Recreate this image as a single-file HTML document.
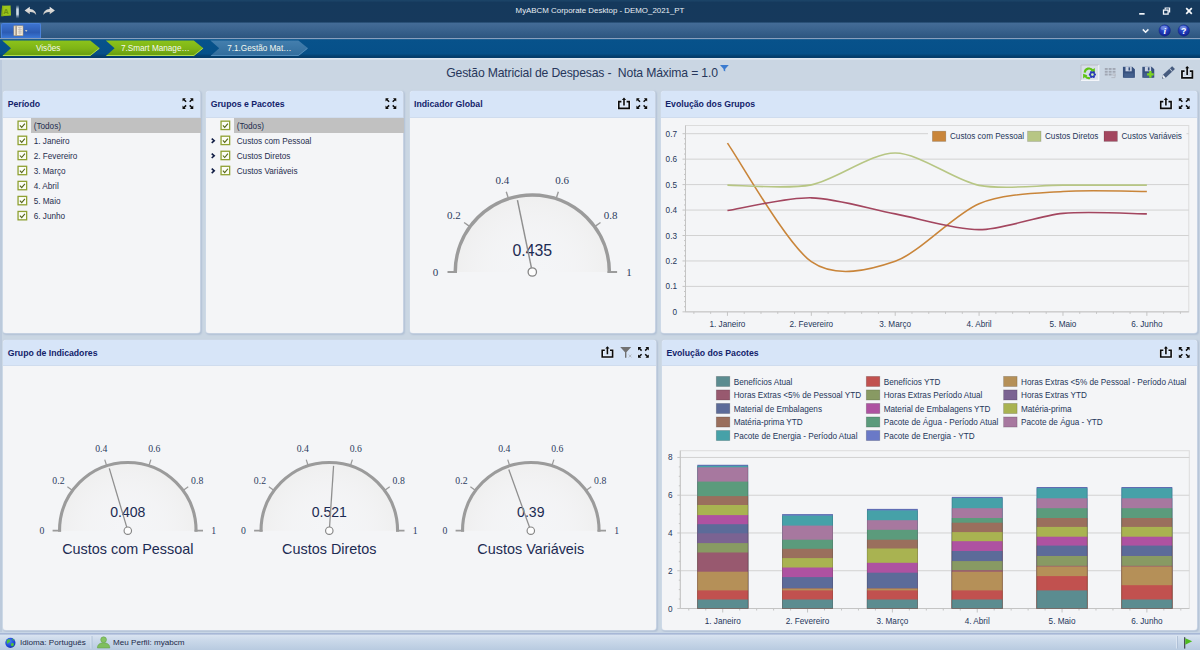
<!DOCTYPE html>
<html lang="pt"><head><meta charset="utf-8"><title>MyABCM Corporate Desktop - DEMO_2021_PT</title>
<style>
*{box-sizing:border-box;margin:0;padding:0}
html,body{width:1200px;height:650px;overflow:hidden}
body{position:relative;background:#cad6e3;font-family:"Liberation Sans",sans-serif;font-size:9px;color:#1f2d4d}
.abs{position:absolute}
#titlebar{left:0;top:0;width:1200px;height:22px;background:linear-gradient(#1c4568 0,#1a4165 1px,#15395c 2.5px,#16395c 100%)}
#titletext{left:0;top:0;width:1200px;height:22px;line-height:22px;text-align:center;color:#e9eef5;font-size:7.9px}
#menubar{left:0;top:22px;width:1200px;height:16px;background:linear-gradient(#1d4368 0,#436b96 1.5px,#39628d 50%,#2c557f 100%)}
#menubtn{left:1px;top:23px;width:40px;height:15px;background:linear-gradient(#3d73cf 0,#2c5cb4 60%,#3b78d6 100%);border-radius:2px 2px 0 0;border:1px solid #4a82dc;border-bottom:none}
#crumbbar{left:0;top:38px;width:1200px;height:20px;background:linear-gradient(#8fa5c1 0,#8098b8 1px,#07528b 1.6px,#065089 78%,#053e6d 92%,#053c6a 100%)}
#pagehl{left:0;top:58px;width:1200px;height:2px;background:linear-gradient(#e3eaf2,#d3dde9)}
#pagetitle{left:0;top:62px;width:1164px;height:22px;line-height:22px;text-align:center;font-size:12.2px;letter-spacing:-0.16px;color:#27375b;white-space:pre}
.panel{position:absolute;background:#f4f5f7;border-radius:3px;box-shadow:0 0 0 0.6px #d3deeb,1px 1.2px 1.6px 0.4px #b3c2d6;overflow:hidden}
.phead{position:absolute;left:0;top:0;right:0;height:27px;background:#d7e5f8;border-bottom:1px solid #cfdcee}
.ptitle{position:absolute;left:4.4px;top:0;height:27px;line-height:27px;font-weight:bold;font-size:8.7px;color:#12226a;white-space:nowrap}
.row{position:absolute;height:15px;line-height:15px;font-size:8.2px;color:#1f2d4d;white-space:nowrap}
.sel{position:absolute;height:15px;background:#c1c1c1}
.cb{position:absolute;width:9.9px;height:9.8px;border:1.25px solid #8fa132;background:#fcfdf6}
#status{left:0;top:631.5px;width:1200px;height:18.5px;background:linear-gradient(#c8d6e6 0,#c8d6e6 1.2px,#a7b7d6 1.4px,#a9b9d7 2.4px,#dae4f1 2.7px,#cbd9ea 45%,#b8cae0 100%)}
.st{position:absolute;top:633px;height:17px;line-height:19px;font-size:8.1px;color:#1b2a4a;white-space:nowrap}
svg{position:absolute;left:0;top:0;overflow:visible}
svg text{font-family:"Liberation Sans",sans-serif}
</style></head>
<body>
<div class="abs" id="titlebar"></div>
<div class="abs" id="titletext">MyABCM Corporate Desktop - DEMO_2021_PT</div>
<div class="abs" id="menubar"></div>
<div class="abs" id="menubtn"></div>
<div class="abs" id="crumbbar"></div>
<div class="abs" id="pagehl"></div>
<div class="abs" style="left:0;top:60px;width:1.6px;height:573px;background:#bccadc"></div>
<div class="abs" id="pagetitle">Gestão Matricial de Despesas -  Nota Máxima = 1.0</div>
<div class="panel" style="left:3.3px;top:91px;width:197px;height:242.4px"><div class="phead" style="height:27px"><div class="ptitle" style="height:27px;line-height:27px">Período</div></div></div>
<div class="panel" style="left:206.3px;top:91px;width:197px;height:242.4px"><div class="phead" style="height:27px"><div class="ptitle" style="height:27px;line-height:27px">Grupos e Pacotes</div></div></div>
<div class="panel" style="left:409.7px;top:91px;width:245.1px;height:242.4px"><div class="phead" style="height:27px"><div class="ptitle" style="height:27px;line-height:27px">Indicador Global</div></div></div>
<div class="panel" style="left:660.9px;top:91px;width:535.9px;height:242.4px"><div class="phead" style="height:27px"><div class="ptitle" style="height:27px;line-height:27px">Evolução dos Grupos</div></div></div>
<div class="panel" style="left:3.3px;top:340px;width:652.8px;height:290px"><div class="phead" style="height:26px"><div class="ptitle" style="height:26px;line-height:26px">Grupo de Indicadores</div></div></div>
<div class="panel" style="left:662px;top:340px;width:534.8px;height:290px"><div class="phead" style="height:26px"><div class="ptitle" style="height:26px;line-height:26px">Evolução dos Pacotes</div></div></div>
<div class="sel" style="left:31px;top:118.1px;width:169.5px"></div><div class="row" style="left:33.7px;top:119.00px">(Todos)</div><div class="row" style="left:33.7px;top:134.05px">1. Janeiro</div><div class="row" style="left:33.7px;top:149.10px">2. Fevereiro</div><div class="row" style="left:33.7px;top:164.15px">3. Março</div><div class="row" style="left:33.7px;top:179.20px">4. Abril</div><div class="row" style="left:33.7px;top:194.25px">5. Maio</div><div class="row" style="left:33.7px;top:209.30px">6. Junho</div>
<div class="sel" style="left:234px;top:118.1px;width:169.5px"></div><div class="row" style="left:236.7px;top:119.00px">(Todos)</div><div class="row" style="left:236.7px;top:134.05px">Custos com Pessoal</div><div class="row" style="left:236.7px;top:149.10px">Custos Diretos</div><div class="row" style="left:236.7px;top:164.15px">Custos Variáveis</div>
<div class="abs" id="status"></div>
<div class="st" style="left:20px">Idioma: Português</div>
<div class="st" style="left:113px">Meu Perfil: myabcm</div>
<svg width="1200" height="650" viewBox="0 0 1200 650">
<defs><radialGradient id="gfill" cx="0.5" cy="1" r="0.5" gradientUnits="objectBoundingBox" gradientTransform="translate(0 0) scale(1 2) translate(0 -0.5)"><stop offset="0" stop-color="#f3f4f6" stop-opacity="0"/><stop offset="0.55" stop-color="#f2f2f3" stop-opacity="0.5"/><stop offset="1" stop-color="#efefef" stop-opacity="1"/></radialGradient><linearGradient id="greeng" x1="0" y1="0" x2="0" y2="1"><stop offset="0" stop-color="#8cc31b"/><stop offset="0.5" stop-color="#7fb516"/><stop offset="0.9" stop-color="#6aa010"/><stop offset="1" stop-color="#86bf22"/></linearGradient><linearGradient id="blueg" x1="0" y1="0" x2="0" y2="1"><stop offset="0" stop-color="#447fae"/><stop offset="1" stop-color="#316c9c"/></linearGradient><linearGradient id="sepg" x1="0" y1="0" x2="0" y2="1"><stop offset="0" stop-color="#9fb6cd" stop-opacity="0.1"/><stop offset="0.3" stop-color="#cfdde9"/><stop offset="0.7" stop-color="#cfdde9"/><stop offset="1" stop-color="#9fb6cd" stop-opacity="0.1"/></linearGradient><linearGradient id="undog" x1="0" y1="0" x2="0" y2="1"><stop offset="0" stop-color="#eeeeee"/><stop offset="1" stop-color="#c4c0ba"/></linearGradient><radialGradient id="ballg" cx="0.45" cy="0.3" r="0.75"><stop offset="0" stop-color="#3b63e0"/><stop offset="0.6" stop-color="#1c36b4"/><stop offset="1" stop-color="#0f1f86"/></radialGradient><radialGradient id="globeg" cx="0.4" cy="0.35" r="0.7"><stop offset="0" stop-color="#4f86f2"/><stop offset="0.7" stop-color="#1d45d6"/><stop offset="1" stop-color="#1532a4"/></radialGradient></defs>
<path d="M455.25 272 A77.05 77.05 0 0 1 609.35 272 Z" fill="url(#gfill)"/>
<path d="M455.25 273 L455.25 272 A77.05 77.05 0 0 1 609.35 272 L609.35 273" fill="none" stroke="#9b9b9b" stroke-width="3.5"/>
<path d="M447.5 272 H457 M607.6 272 H617.1" stroke="#9b9b9b" stroke-width="2" fill="none"/>
<path d="M469.19 226.15 L464.1 222.45 M508.19 197.81 L506.25 191.83 M556.41 197.81 L558.35 191.83 M595.41 226.15 L600.5 222.45" stroke="#9b9b9b" stroke-width="1.4" fill="none"/>
<text x="435.5" y="275.63" text-anchor="middle" font-size="11" fill="#2d3c5e" style="font-family:&quot;Liberation Serif&quot;,serif">0</text>
<text x="453.99" y="218.73" text-anchor="middle" font-size="11" fill="#2d3c5e" style="font-family:&quot;Liberation Serif&quot;,serif">0.2</text>
<text x="502.39" y="183.57" text-anchor="middle" font-size="11" fill="#2d3c5e" style="font-family:&quot;Liberation Serif&quot;,serif">0.4</text>
<text x="562.21" y="183.57" text-anchor="middle" font-size="11" fill="#2d3c5e" style="font-family:&quot;Liberation Serif&quot;,serif">0.6</text>
<text x="610.61" y="218.73" text-anchor="middle" font-size="11" fill="#2d3c5e" style="font-family:&quot;Liberation Serif&quot;,serif">0.8</text>
<text x="629.1" y="275.63" text-anchor="middle" font-size="11" fill="#2d3c5e" style="font-family:&quot;Liberation Serif&quot;,serif">1</text>
<text x="532.3" y="256" text-anchor="middle" font-size="15.9" fill="#1c2b52">0.435</text>
<path d="M531.45 267.89 L517.44 200.22" stroke="#8f8f8f" stroke-width="1.45" fill="none"/>
<circle cx="532.3" cy="272" r="4.2" fill="#fdfdfd" stroke="#858585" stroke-width="1.3"/>
<path d="M59.53 530.7 A68.27 68.27 0 0 1 196.07 530.7 Z" fill="url(#gfill)"/>
<path d="M59.53 531.7 L59.53 530.7 A68.27 68.27 0 0 1 196.07 530.7 L196.07 531.7" fill="none" stroke="#9b9b9b" stroke-width="3.1"/>
<path d="M52.6 530.7 H61.08 M194.52 530.7 H203" stroke="#9b9b9b" stroke-width="1.77" fill="none"/>
<path d="M71.88 490.07 L67.37 486.79 M106.44 464.96 L104.72 459.66 M149.16 464.96 L150.88 459.66 M183.72 490.07 L188.23 486.79" stroke="#9b9b9b" stroke-width="1.24" fill="none"/>
<text x="42.03" y="533.92" text-anchor="middle" font-size="9.75" fill="#2d3c5e" style="font-family:&quot;Liberation Serif&quot;,serif">0</text>
<text x="58.41" y="483.5" text-anchor="middle" font-size="9.75" fill="#2d3c5e" style="font-family:&quot;Liberation Serif&quot;,serif">0.2</text>
<text x="101.29" y="452.34" text-anchor="middle" font-size="9.75" fill="#2d3c5e" style="font-family:&quot;Liberation Serif&quot;,serif">0.4</text>
<text x="154.31" y="452.34" text-anchor="middle" font-size="9.75" fill="#2d3c5e" style="font-family:&quot;Liberation Serif&quot;,serif">0.6</text>
<text x="197.19" y="483.5" text-anchor="middle" font-size="9.75" fill="#2d3c5e" style="font-family:&quot;Liberation Serif&quot;,serif">0.8</text>
<text x="213.57" y="533.92" text-anchor="middle" font-size="9.75" fill="#2d3c5e" style="font-family:&quot;Liberation Serif&quot;,serif">1</text>
<text x="127.8" y="516.52" text-anchor="middle" font-size="14.09" fill="#1c2b52">0.408</text>
<path d="M126.74 527.13 L109.29 468.44" stroke="#8f8f8f" stroke-width="1.28" fill="none"/>
<circle cx="127.8" cy="530.7" r="3.72" fill="#fdfdfd" stroke="#858585" stroke-width="1.15"/>
<text x="127.8" y="553.7" text-anchor="middle" font-size="14.4" fill="#1c2b52">Custos com Pessoal</text>
<path d="M261.03 530.7 A68.27 68.27 0 0 1 397.57 530.7 Z" fill="url(#gfill)"/>
<path d="M261.03 531.7 L261.03 530.7 A68.27 68.27 0 0 1 397.57 530.7 L397.57 531.7" fill="none" stroke="#9b9b9b" stroke-width="3.1"/>
<path d="M254.1 530.7 H262.58 M396.02 530.7 H404.5" stroke="#9b9b9b" stroke-width="1.77" fill="none"/>
<path d="M273.38 490.07 L268.87 486.79 M307.94 464.96 L306.22 459.66 M350.66 464.96 L352.38 459.66 M385.22 490.07 L389.73 486.79" stroke="#9b9b9b" stroke-width="1.24" fill="none"/>
<text x="243.53" y="533.92" text-anchor="middle" font-size="9.75" fill="#2d3c5e" style="font-family:&quot;Liberation Serif&quot;,serif">0</text>
<text x="259.91" y="483.5" text-anchor="middle" font-size="9.75" fill="#2d3c5e" style="font-family:&quot;Liberation Serif&quot;,serif">0.2</text>
<text x="302.79" y="452.34" text-anchor="middle" font-size="9.75" fill="#2d3c5e" style="font-family:&quot;Liberation Serif&quot;,serif">0.4</text>
<text x="355.81" y="452.34" text-anchor="middle" font-size="9.75" fill="#2d3c5e" style="font-family:&quot;Liberation Serif&quot;,serif">0.6</text>
<text x="398.69" y="483.5" text-anchor="middle" font-size="9.75" fill="#2d3c5e" style="font-family:&quot;Liberation Serif&quot;,serif">0.8</text>
<text x="415.07" y="533.92" text-anchor="middle" font-size="9.75" fill="#2d3c5e" style="font-family:&quot;Liberation Serif&quot;,serif">1</text>
<text x="329.3" y="516.52" text-anchor="middle" font-size="14.09" fill="#1c2b52">0.521</text>
<path d="M329.55 526.99 L333.58 465.89" stroke="#8f8f8f" stroke-width="1.28" fill="none"/>
<circle cx="329.3" cy="530.7" r="3.72" fill="#fdfdfd" stroke="#858585" stroke-width="1.15"/>
<text x="329.3" y="553.7" text-anchor="middle" font-size="14.4" fill="#1c2b52">Custos Diretos</text>
<path d="M462.53 530.7 A68.27 68.27 0 0 1 599.07 530.7 Z" fill="url(#gfill)"/>
<path d="M462.53 531.7 L462.53 530.7 A68.27 68.27 0 0 1 599.07 530.7 L599.07 531.7" fill="none" stroke="#9b9b9b" stroke-width="3.1"/>
<path d="M455.6 530.7 H464.08 M597.52 530.7 H606" stroke="#9b9b9b" stroke-width="1.77" fill="none"/>
<path d="M474.88 490.07 L470.37 486.79 M509.44 464.96 L507.72 459.66 M552.16 464.96 L553.88 459.66 M586.72 490.07 L591.23 486.79" stroke="#9b9b9b" stroke-width="1.24" fill="none"/>
<text x="445.03" y="533.92" text-anchor="middle" font-size="9.75" fill="#2d3c5e" style="font-family:&quot;Liberation Serif&quot;,serif">0</text>
<text x="461.41" y="483.5" text-anchor="middle" font-size="9.75" fill="#2d3c5e" style="font-family:&quot;Liberation Serif&quot;,serif">0.2</text>
<text x="504.29" y="452.34" text-anchor="middle" font-size="9.75" fill="#2d3c5e" style="font-family:&quot;Liberation Serif&quot;,serif">0.4</text>
<text x="557.31" y="452.34" text-anchor="middle" font-size="9.75" fill="#2d3c5e" style="font-family:&quot;Liberation Serif&quot;,serif">0.6</text>
<text x="600.19" y="483.5" text-anchor="middle" font-size="9.75" fill="#2d3c5e" style="font-family:&quot;Liberation Serif&quot;,serif">0.8</text>
<text x="616.57" y="533.92" text-anchor="middle" font-size="9.75" fill="#2d3c5e" style="font-family:&quot;Liberation Serif&quot;,serif">1</text>
<text x="530.8" y="516.52" text-anchor="middle" font-size="14.09" fill="#1c2b52">0.39</text>
<path d="M529.54 527.2 L508.8 469.59" stroke="#8f8f8f" stroke-width="1.28" fill="none"/>
<circle cx="530.8" cy="530.7" r="3.72" fill="#fdfdfd" stroke="#858585" stroke-width="1.15"/>
<text x="530.8" y="553.7" text-anchor="middle" font-size="14.4" fill="#1c2b52">Custos Variáveis</text>
<rect x="685.5" y="125.5" width="503.3" height="186.35" fill="none" stroke="#dcdcdc" stroke-width="1"/>
<path d="M685.5 286.4 H1188.8 M685.5 260.95 H1188.8 M685.5 235.5 H1188.8 M685.5 210.05 H1188.8 M685.5 184.6 H1188.8 M685.5 159.15 H1188.8 M685.5 133.7 H1188.8" stroke="#d2d2d2" stroke-width="1" fill="none"/>
<path d="M685.5 125.5 V311.85 H1188.8" stroke="#c4c4c4" stroke-width="1" fill="none"/>
<path d="M682.5 311.85 H685.5 M684.0 306.76 H685.5 M684.0 301.67 H685.5 M684.0 296.58 H685.5 M684.0 291.49 H685.5 M682.5 286.4 H685.5 M684.0 281.31 H685.5 M684.0 276.22 H685.5 M684.0 271.13 H685.5 M684.0 266.04 H685.5 M682.5 260.95 H685.5 M684.0 255.86 H685.5 M684.0 250.77 H685.5 M684.0 245.68 H685.5 M684.0 240.59 H685.5 M682.5 235.5 H685.5 M684.0 230.41 H685.5 M684.0 225.32 H685.5 M684.0 220.23 H685.5 M684.0 215.14 H685.5 M682.5 210.05 H685.5 M684.0 204.96 H685.5 M684.0 199.87 H685.5 M684.0 194.78 H685.5 M684.0 189.69 H685.5 M682.5 184.6 H685.5 M684.0 179.51 H685.5 M684.0 174.42 H685.5 M684.0 169.33 H685.5 M684.0 164.24 H685.5 M682.5 159.15 H685.5 M684.0 154.06 H685.5 M684.0 148.97 H685.5 M684.0 143.88 H685.5 M684.0 138.79 H685.5 M682.5 133.7 H685.5 M727.44 311.85 V315.85 M693.89 311.85 V313.85 M710.66 311.85 V313.85 M744.22 311.85 V313.85 M760.99 311.85 V313.85 M811.33 311.85 V315.85 M777.77 311.85 V313.85 M794.55 311.85 V313.85 M828.1 311.85 V313.85 M844.88 311.85 V313.85 M895.21 311.85 V315.85 M861.65 311.85 V313.85 M878.43 311.85 V313.85 M911.98 311.85 V313.85 M928.76 311.85 V313.85 M979.09 311.85 V315.85 M945.54 311.85 V313.85 M962.32 311.85 V313.85 M995.87 311.85 V313.85 M1012.64 311.85 V313.85 M1062.97 311.85 V315.85 M1029.42 311.85 V313.85 M1046.2 311.85 V313.85 M1079.75 311.85 V313.85 M1096.53 311.85 V313.85 M1146.86 311.85 V315.85 M1113.31 311.85 V313.85 M1130.08 311.85 V313.85 M1163.63 311.85 V313.85 M1180.41 311.85 V313.85" stroke="#c4c4c4" stroke-width="1" fill="none"/>
<text x="677" y="314.85" text-anchor="end" font-size="8.2" fill="#25355a">0</text>
<text x="677" y="289.4" text-anchor="end" font-size="8.2" fill="#25355a">0.1</text>
<text x="677" y="263.95" text-anchor="end" font-size="8.2" fill="#25355a">0.2</text>
<text x="677" y="238.5" text-anchor="end" font-size="8.2" fill="#25355a">0.3</text>
<text x="677" y="213.05" text-anchor="end" font-size="8.2" fill="#25355a">0.4</text>
<text x="677" y="187.6" text-anchor="end" font-size="8.2" fill="#25355a">0.5</text>
<text x="677" y="162.15" text-anchor="end" font-size="8.2" fill="#25355a">0.6</text>
<text x="677" y="136.7" text-anchor="end" font-size="8.2" fill="#25355a">0.7</text>
<text x="727.44" y="326.5" text-anchor="middle" font-size="8.2" fill="#25355a">1. Janeiro</text>
<text x="811.33" y="326.5" text-anchor="middle" font-size="8.2" fill="#25355a">2. Fevereiro</text>
<text x="895.21" y="326.5" text-anchor="middle" font-size="8.2" fill="#25355a">3. Março</text>
<text x="979.09" y="326.5" text-anchor="middle" font-size="8.2" fill="#25355a">4. Abril</text>
<text x="1062.97" y="326.5" text-anchor="middle" font-size="8.2" fill="#25355a">5. Maio</text>
<text x="1146.86" y="326.5" text-anchor="middle" font-size="8.2" fill="#25355a">6. Junho</text>
<path d="M727.44 143.12 C739.74 160.51 786.72 244.39 811.33 261.71 C835.93 279.03 870.6 269.71 895.21 261.2 C919.81 252.69 954.49 213.92 979.09 203.69 C1003.7 193.46 1038.37 193.26 1062.97 191.47 C1087.58 189.68 1134.56 191.47 1146.86 191.47" stroke="#c9853a" stroke-width="1.6" fill="none" stroke-linecap="butt"/>
<path d="M727.44 185.11 C739.74 185.07 786.72 189.56 811.33 184.85 C835.93 180.15 870.6 152.97 895.21 153.04 C919.81 153.12 954.49 180.66 979.09 185.36 C1003.7 190.07 1038.37 185.15 1062.97 185.11 C1087.58 185.07 1134.56 185.11 1146.86 185.11" stroke="#b7c684" stroke-width="1.6" fill="none" stroke-linecap="butt"/>
<path d="M727.44 210.56 C739.74 208.69 786.72 197.35 811.33 197.83 C835.93 198.32 870.6 209.2 895.21 213.87 C919.81 218.53 954.49 229.72 979.09 229.65 C1003.7 229.57 1038.37 215.67 1062.97 213.36 C1087.58 211.04 1134.56 213.79 1146.86 213.87" stroke="#a3465f" stroke-width="1.6" fill="none" stroke-linecap="butt"/>
<rect x="928" y="127.5" width="258.5" height="17.5" fill="#f4f5f7"/>
<rect x="932.4" y="131.2" width="13.4" height="10.2" fill="#c9853a" stroke="rgba(0,0,0,0.18)" stroke-width="0.8"/>
<text x="950" y="139.4" font-size="8.15" fill="#25355a">Custos com Pessoal</text>
<rect x="1027.6" y="131.2" width="13.4" height="10.2" fill="#b7c684" stroke="rgba(0,0,0,0.18)" stroke-width="0.8"/>
<text x="1045" y="139.4" font-size="8.15" fill="#25355a">Custos Diretos</text>
<rect x="1104" y="131.2" width="13.4" height="10.2" fill="#a3465f" stroke="rgba(0,0,0,0.18)" stroke-width="0.8"/>
<text x="1121.5" y="139.4" font-size="8.15" fill="#25355a">Custos Variáveis</text>
<rect x="680.3" y="450.7" width="509" height="157.8" fill="none" stroke="#dcdcdc" stroke-width="1"/>
<path d="M680.3 570.74 H1189.3 M680.3 532.98 H1189.3 M680.3 495.22 H1189.3 M680.3 457.46 H1189.3" stroke="#d2d2d2" stroke-width="1" fill="none"/>
<path d="M680.3 450.7 V608.5 H1189.3" stroke="#c4c4c4" stroke-width="1" fill="none"/>
<path d="M677.3 608.5 H680.3 M678.8 599.06 H680.3 M678.8 589.62 H680.3 M678.8 580.18 H680.3 M677.3 570.74 H680.3 M678.8 561.3 H680.3 M678.8 551.86 H680.3 M678.8 542.42 H680.3 M677.3 532.98 H680.3 M678.8 523.54 H680.3 M678.8 514.1 H680.3 M678.8 504.66 H680.3 M677.3 495.22 H680.3 M678.8 485.78 H680.3 M678.8 476.34 H680.3 M678.8 466.9 H680.3 M677.3 457.46 H680.3 M722.72 608.5 V612.5 M688.78 608.5 V610.5 M705.75 608.5 V610.5 M739.68 608.5 V610.5 M756.65 608.5 V610.5 M807.55 608.5 V612.5 M773.62 608.5 V610.5 M790.58 608.5 V610.5 M824.52 608.5 V610.5 M841.48 608.5 V610.5 M892.38 608.5 V612.5 M858.45 608.5 V610.5 M875.42 608.5 V610.5 M909.35 608.5 V610.5 M926.32 608.5 V610.5 M977.22 608.5 V612.5 M943.28 608.5 V610.5 M960.25 608.5 V610.5 M994.18 608.5 V610.5 M1011.15 608.5 V610.5 M1062.05 608.5 V612.5 M1028.12 608.5 V610.5 M1045.08 608.5 V610.5 M1079.02 608.5 V610.5 M1095.98 608.5 V610.5 M1146.88 608.5 V612.5 M1112.95 608.5 V610.5 M1129.92 608.5 V610.5 M1163.85 608.5 V610.5 M1180.82 608.5 V610.5" stroke="#c4c4c4" stroke-width="1" fill="none"/>
<text x="672.5" y="611.5" text-anchor="end" font-size="8.2" fill="#25355a">0</text>
<text x="672.5" y="573.74" text-anchor="end" font-size="8.2" fill="#25355a">2</text>
<text x="672.5" y="535.98" text-anchor="end" font-size="8.2" fill="#25355a">4</text>
<text x="672.5" y="498.22" text-anchor="end" font-size="8.2" fill="#25355a">6</text>
<text x="672.5" y="460.46" text-anchor="end" font-size="8.2" fill="#25355a">8</text>
<text x="722.72" y="624" text-anchor="middle" font-size="8.2" fill="#25355a">1. Janeiro</text>
<text x="807.55" y="624" text-anchor="middle" font-size="8.2" fill="#25355a">2. Fevereiro</text>
<text x="892.38" y="624" text-anchor="middle" font-size="8.2" fill="#25355a">3. Março</text>
<text x="977.22" y="624" text-anchor="middle" font-size="8.2" fill="#25355a">4. Abril</text>
<text x="1062.05" y="624" text-anchor="middle" font-size="8.2" fill="#25355a">5. Maio</text>
<text x="1146.88" y="624" text-anchor="middle" font-size="8.2" fill="#25355a">6. Junho</text>
<rect x="697.32" y="464.8" width="50.8" height="143.7" fill="#6a79c7"/>
<rect x="697.32" y="465.8" width="50.8" height="142.7" fill="#46a1a8"/>
<rect x="697.32" y="467.3" width="50.8" height="141.2" fill="#a7789f"/>
<rect x="697.32" y="481.6" width="50.8" height="126.9" fill="#5b9b7c"/>
<rect x="697.32" y="496.1" width="50.8" height="112.4" fill="#9a6f5d"/>
<rect x="697.32" y="505" width="50.8" height="103.5" fill="#a9b351"/>
<rect x="697.32" y="515.1" width="50.8" height="93.4" fill="#ae52a1"/>
<rect x="697.32" y="524.2" width="50.8" height="84.3" fill="#5c6b99"/>
<rect x="697.32" y="533.3" width="50.8" height="75.2" fill="#7b6392"/>
<rect x="697.32" y="543.1" width="50.8" height="65.4" fill="#889a63"/>
<rect x="697.32" y="552.5" width="50.8" height="56" fill="#98596f"/>
<rect x="697.32" y="571.7" width="50.8" height="36.8" fill="#b59058"/>
<rect x="697.32" y="590.4" width="50.8" height="18.1" fill="#c1514f"/>
<rect x="697.32" y="599.5" width="50.8" height="9" fill="#5b8c90"/>
<rect x="697.72" y="465.2" width="50" height="143.3" fill="none" stroke="#000000" stroke-opacity="0.13" stroke-width="0.8"/>
<rect x="782.15" y="514.1" width="50.8" height="94.4" fill="#6a79c7"/>
<rect x="782.15" y="515.6" width="50.8" height="92.9" fill="#46a1a8"/>
<rect x="782.15" y="525.6" width="50.8" height="82.9" fill="#a7789f"/>
<rect x="782.15" y="539.7" width="50.8" height="68.8" fill="#5b9b7c"/>
<rect x="782.15" y="548.8" width="50.8" height="59.7" fill="#9a6f5d"/>
<rect x="782.15" y="558.1" width="50.8" height="50.4" fill="#a9b351"/>
<rect x="782.15" y="567.5" width="50.8" height="41" fill="#ae52a1"/>
<rect x="782.15" y="577.1" width="50.8" height="31.4" fill="#5c6b99"/>
<rect x="782.15" y="588" width="50.8" height="20.5" fill="#7b6392"/>
<rect x="782.15" y="588.2" width="50.8" height="20.3" fill="#889a63"/>
<rect x="782.15" y="588.4" width="50.8" height="20.1" fill="#98596f"/>
<rect x="782.15" y="588.8" width="50.8" height="19.7" fill="#b59058"/>
<rect x="782.15" y="590.4" width="50.8" height="18.1" fill="#c1514f"/>
<rect x="782.15" y="599.5" width="50.8" height="9" fill="#5b8c90"/>
<rect x="782.55" y="514.5" width="50" height="94" fill="none" stroke="#000000" stroke-opacity="0.13" stroke-width="0.8"/>
<rect x="866.98" y="508.9" width="50.8" height="99.6" fill="#6a79c7"/>
<rect x="866.98" y="510.4" width="50.8" height="98.1" fill="#46a1a8"/>
<rect x="866.98" y="520.2" width="50.8" height="88.3" fill="#a7789f"/>
<rect x="866.98" y="529.8" width="50.8" height="78.7" fill="#5b9b7c"/>
<rect x="866.98" y="539.7" width="50.8" height="68.8" fill="#9a6f5d"/>
<rect x="866.98" y="548.5" width="50.8" height="60" fill="#a9b351"/>
<rect x="866.98" y="562.8" width="50.8" height="45.7" fill="#ae52a1"/>
<rect x="866.98" y="572.7" width="50.8" height="35.8" fill="#5c6b99"/>
<rect x="866.98" y="588" width="50.8" height="20.5" fill="#7b6392"/>
<rect x="866.98" y="588.2" width="50.8" height="20.3" fill="#889a63"/>
<rect x="866.98" y="588.4" width="50.8" height="20.1" fill="#98596f"/>
<rect x="866.98" y="588.8" width="50.8" height="19.7" fill="#b59058"/>
<rect x="866.98" y="590.4" width="50.8" height="18.1" fill="#c1514f"/>
<rect x="866.98" y="599.5" width="50.8" height="9" fill="#5b8c90"/>
<rect x="867.38" y="509.3" width="50" height="99.2" fill="none" stroke="#000000" stroke-opacity="0.13" stroke-width="0.8"/>
<rect x="951.82" y="496.9" width="50.8" height="111.6" fill="#6a79c7"/>
<rect x="951.82" y="498.1" width="50.8" height="110.4" fill="#46a1a8"/>
<rect x="951.82" y="508.2" width="50.8" height="100.3" fill="#a7789f"/>
<rect x="951.82" y="518" width="50.8" height="90.5" fill="#5b9b7c"/>
<rect x="951.82" y="522.7" width="50.8" height="85.8" fill="#9a6f5d"/>
<rect x="951.82" y="532.1" width="50.8" height="76.4" fill="#a9b351"/>
<rect x="951.82" y="541.2" width="50.8" height="67.3" fill="#ae52a1"/>
<rect x="951.82" y="551" width="50.8" height="57.5" fill="#5c6b99"/>
<rect x="951.82" y="560.9" width="50.8" height="47.6" fill="#7b6392"/>
<rect x="951.82" y="561.1" width="50.8" height="47.4" fill="#889a63"/>
<rect x="951.82" y="570.2" width="50.8" height="38.3" fill="#98596f"/>
<rect x="951.82" y="571.7" width="50.8" height="36.8" fill="#b59058"/>
<rect x="951.82" y="590.4" width="50.8" height="18.1" fill="#c1514f"/>
<rect x="951.82" y="599.5" width="50.8" height="9" fill="#5b8c90"/>
<rect x="952.22" y="497.3" width="50" height="111.2" fill="none" stroke="#000000" stroke-opacity="0.13" stroke-width="0.8"/>
<rect x="1036.65" y="487" width="50.8" height="121.5" fill="#6a79c7"/>
<rect x="1036.65" y="488.2" width="50.8" height="120.3" fill="#46a1a8"/>
<rect x="1036.65" y="498.3" width="50.8" height="110.2" fill="#a7789f"/>
<rect x="1036.65" y="508.2" width="50.8" height="100.3" fill="#5b9b7c"/>
<rect x="1036.65" y="518" width="50.8" height="90.5" fill="#9a6f5d"/>
<rect x="1036.65" y="526.9" width="50.8" height="81.6" fill="#a9b351"/>
<rect x="1036.65" y="536.7" width="50.8" height="71.8" fill="#ae52a1"/>
<rect x="1036.65" y="545.6" width="50.8" height="62.9" fill="#5c6b99"/>
<rect x="1036.65" y="555.8" width="50.8" height="52.7" fill="#7b6392"/>
<rect x="1036.65" y="556" width="50.8" height="52.5" fill="#889a63"/>
<rect x="1036.65" y="565.8" width="50.8" height="42.7" fill="#98596f"/>
<rect x="1036.65" y="566.5" width="50.8" height="42" fill="#b59058"/>
<rect x="1036.65" y="576.1" width="50.8" height="32.4" fill="#c1514f"/>
<rect x="1036.65" y="590.4" width="50.8" height="18.1" fill="#5b8c90"/>
<rect x="1037.05" y="487.4" width="50" height="121.1" fill="none" stroke="#000000" stroke-opacity="0.13" stroke-width="0.8"/>
<rect x="1121.48" y="487" width="50.8" height="121.5" fill="#6a79c7"/>
<rect x="1121.48" y="488.2" width="50.8" height="120.3" fill="#46a1a8"/>
<rect x="1121.48" y="498.3" width="50.8" height="110.2" fill="#a7789f"/>
<rect x="1121.48" y="508.2" width="50.8" height="100.3" fill="#5b9b7c"/>
<rect x="1121.48" y="518" width="50.8" height="90.5" fill="#9a6f5d"/>
<rect x="1121.48" y="526.9" width="50.8" height="81.6" fill="#a9b351"/>
<rect x="1121.48" y="536.7" width="50.8" height="71.8" fill="#ae52a1"/>
<rect x="1121.48" y="545.6" width="50.8" height="62.9" fill="#5c6b99"/>
<rect x="1121.48" y="555.8" width="50.8" height="52.7" fill="#7b6392"/>
<rect x="1121.48" y="556" width="50.8" height="52.5" fill="#889a63"/>
<rect x="1121.48" y="565.8" width="50.8" height="42.7" fill="#98596f"/>
<rect x="1121.48" y="566.5" width="50.8" height="42" fill="#b59058"/>
<rect x="1121.48" y="585.2" width="50.8" height="23.3" fill="#c1514f"/>
<rect x="1121.48" y="599.5" width="50.8" height="9" fill="#5b8c90"/>
<rect x="1121.88" y="487.4" width="50" height="121.1" fill="none" stroke="#000000" stroke-opacity="0.13" stroke-width="0.8"/>
<rect x="716.3" y="376.4" width="13.5" height="10.1" fill="#5b8c90" stroke="rgba(0,0,0,0.2)" stroke-width="0.8"/>
<text x="733.7" y="384.7" font-size="8.2" fill="#25355a">Benefícios Atual</text>
<rect x="866.3" y="376.4" width="13.5" height="10.1" fill="#c1514f" stroke="rgba(0,0,0,0.2)" stroke-width="0.8"/>
<text x="883.7" y="384.7" font-size="8.2" fill="#25355a">Benefícios YTD</text>
<rect x="1003.6" y="376.4" width="13.5" height="10.1" fill="#b59058" stroke="rgba(0,0,0,0.2)" stroke-width="0.8"/>
<text x="1021" y="384.7" font-size="8.2" fill="#25355a">Horas Extras &lt;5% de Pessoal - Período Atual</text>
<rect x="716.3" y="389.92" width="13.5" height="10.1" fill="#98596f" stroke="rgba(0,0,0,0.2)" stroke-width="0.8"/>
<text x="733.7" y="398.22" font-size="8.2" fill="#25355a">Horas Extras &lt;5% de Pessoal YTD</text>
<rect x="866.3" y="389.92" width="13.5" height="10.1" fill="#889a63" stroke="rgba(0,0,0,0.2)" stroke-width="0.8"/>
<text x="883.7" y="398.22" font-size="8.2" fill="#25355a">Horas Extras Período Atual</text>
<rect x="1003.6" y="389.92" width="13.5" height="10.1" fill="#7b6392" stroke="rgba(0,0,0,0.2)" stroke-width="0.8"/>
<text x="1021" y="398.22" font-size="8.2" fill="#25355a">Horas Extras YTD</text>
<rect x="716.3" y="403.44" width="13.5" height="10.1" fill="#5c6b99" stroke="rgba(0,0,0,0.2)" stroke-width="0.8"/>
<text x="733.7" y="411.74" font-size="8.2" fill="#25355a">Material de Embalagens</text>
<rect x="866.3" y="403.44" width="13.5" height="10.1" fill="#ae52a1" stroke="rgba(0,0,0,0.2)" stroke-width="0.8"/>
<text x="883.7" y="411.74" font-size="8.2" fill="#25355a">Material de Embalagens YTD</text>
<rect x="1003.6" y="403.44" width="13.5" height="10.1" fill="#a9b351" stroke="rgba(0,0,0,0.2)" stroke-width="0.8"/>
<text x="1021" y="411.74" font-size="8.2" fill="#25355a">Matéria-prima</text>
<rect x="716.3" y="416.96" width="13.5" height="10.1" fill="#9a6f5d" stroke="rgba(0,0,0,0.2)" stroke-width="0.8"/>
<text x="733.7" y="425.26" font-size="8.2" fill="#25355a">Matéria-prima YTD</text>
<rect x="866.3" y="416.96" width="13.5" height="10.1" fill="#5b9b7c" stroke="rgba(0,0,0,0.2)" stroke-width="0.8"/>
<text x="883.7" y="425.26" font-size="8.2" fill="#25355a">Pacote de Água - Período Atual</text>
<rect x="1003.6" y="416.96" width="13.5" height="10.1" fill="#a7789f" stroke="rgba(0,0,0,0.2)" stroke-width="0.8"/>
<text x="1021" y="425.26" font-size="8.2" fill="#25355a">Pacote de Água - YTD</text>
<rect x="716.3" y="430.48" width="13.5" height="10.1" fill="#46a1a8" stroke="rgba(0,0,0,0.2)" stroke-width="0.8"/>
<text x="733.7" y="438.78" font-size="8.2" fill="#25355a">Pacote de Energia - Período Atual</text>
<rect x="866.3" y="430.48" width="13.5" height="10.1" fill="#6a79c7" stroke="rgba(0,0,0,0.2)" stroke-width="0.8"/>
<text x="883.7" y="438.78" font-size="8.2" fill="#25355a">Pacote de Energia - YTD</text>
<path d="M2.1 5.7 L10.6 5.5 L11 15.6 L1.4 16.3 Z" fill="#9cc51b"/>
<path d="M1.4 16.3 L2.1 5.7 L3.4 5.7 L2.9 15.2 L11 15.6 L11 15.6 Z" fill="#86ae14"/>
<text x="6.1" y="13.6" text-anchor="middle" font-size="7.6" font-weight="bold" fill="#6d9210">A</text>
<rect x="16.2" y="5.2" width="2.6" height="13" fill="url(#sepg)"/>
<path d="M0 3.7 L5.2 0 L5.2 2.1 C9.2 2.3 11.6 4.9 11.6 8.3 C10.2 6.2 8.3 5.2 5.2 5.3 L5.2 7.4 Z" transform="translate(24.6 6.8)" fill="url(#undog)"/>
<path d="M0 3.7 L5.2 0 L5.2 2.1 C9.2 2.3 11.6 4.9 11.6 8.3 C10.2 6.2 8.3 5.2 5.2 5.3 L5.2 7.4 Z" transform="translate(54.9 6.8) scale(-1 1)" fill="url(#undog)"/>
<rect x="1139.2" y="13" width="5.4" height="1.7" fill="#f3f6fa"/>
<path d="M1165.2 9.6 V8 H1169.6 V12 H1168.4" stroke="#f3f6fa" stroke-width="1.2" fill="none"/>
<rect x="1163.5" y="10.1" width="4.6" height="4" stroke="#f3f6fa" stroke-width="1.3" fill="none"/>
<path d="M1186.2 8.2 L1191.8 13.8 M1191.8 8.2 L1186.2 13.8" stroke="#f8fafc" stroke-width="1.7" fill="none"/>
<path d="M1142.8 29.4 L1145.6 32.2 L1148.4 29.4" stroke="#f4f7fb" stroke-width="1.5" fill="none"/>
<circle cx="1164.7" cy="30.5" r="5.7" fill="url(#ballg)" stroke="#14267a" stroke-width="0.5"/><ellipse cx="1164.1" cy="27.9" rx="3.53" ry="2.17" fill="#ffffff" fill-opacity="0.28"/><text x="1164.9" y="33.6" text-anchor="middle" font-size="9.2" font-weight="bold" font-style="italic" fill="#ffffff" style="font-family:&quot;Liberation Serif&quot;,serif">i</text>
<circle cx="1183.8" cy="30.5" r="5.7" fill="url(#ballg)" stroke="#14267a" stroke-width="0.5"/><ellipse cx="1183.2" cy="27.9" rx="3.53" ry="2.17" fill="#ffffff" fill-opacity="0.28"/><text x="1183.8" y="33.6" text-anchor="middle" font-size="8.8" font-weight="bold" fill="#ffffff">?</text>
<rect x="13.9" y="25.9" width="9.1" height="9.7" fill="#f6efe0" stroke="#b89a6a" stroke-width="0.6"/>
<rect x="15.5" y="26.2" width="1.2" height="9.1" fill="#8a7a66"/>
<path d="M17.8 27.6 H21.9 M17.8 29.4 H21.9 M17.8 31.2 H21.9 M17.8 33 H21.9 M19.9 27 V34.6" stroke="#b7b2ad" stroke-width="0.7" fill="none"/>
<path d="M24.9 30.2 H27.5 L26.2 31.7 Z" fill="#f1e7c4"/>
<path d="M2.2 40.4 H90.2 L99.8 48.2 L90.2 56 H2.2 L11 48.2 Z" fill="url(#greeng)"/><path d="M3 55.5 H90.2 L99.2 48.4" stroke="#c4ec5a" stroke-width="1" fill="none" stroke-opacity="0.75"/><text x="48.2" y="51.2" text-anchor="middle" font-size="8.2" fill="#f4f8ee">Visões</text>
<path d="M105.8 40.4 H193.8 L203.4 48.2 L193.8 56 H105.8 L114.6 48.2 Z" fill="url(#greeng)"/><path d="M106.6 55.5 H193.8 L202.8 48.4" stroke="#c4ec5a" stroke-width="1" fill="none" stroke-opacity="0.75"/><text x="155.3" y="51.2" text-anchor="middle" font-size="8.2" fill="#f4f8ee">7.Smart Manage…</text>
<path d="M210.4 40.4 H298.4 L308 48.2 L298.4 56 H210.4 L219.2 48.2 Z" fill="url(#blueg)"/><path d="M211.2 55.5 H298.4 L307.4 48.4" stroke="#5d97c4" stroke-width="1" fill="none" stroke-opacity="0.75"/><text x="259.3" y="51.2" text-anchor="middle" font-size="8.2" fill="#f4f8ee">7.1.Gestão Mat…</text>
<path d="M720 65 H728.8 L725.2 68.9 V71.6 L723.6 70.6 V68.9 Z" fill="#3b7bd0"/>
<rect x="1081" y="65" width="17.8" height="15.4" fill="#d9dfe9"/><path d="M1081 80.4 V65 H1098.8" stroke="#b9bcc6" stroke-width="0.9" fill="none"/><path d="M1081 80.4 H1098.8 V65" stroke="#f4f6fa" stroke-width="1.1" fill="none"/><path d="M1084.7 72.6 A4.3 4.3 0 0 1 1092.7 70.6" stroke="#5fc414" stroke-width="2.1" fill="none"/><path d="M1090.4 71 L1094.8 67.9 L1094.9 72.8 Z" fill="#5fc414"/><path d="M1090 77.9 A4.3 4.3 0 0 1 1085.2 76" stroke="#5fc414" stroke-width="2.1" fill="none"/><path d="M1087.5 75.2 L1083.1 78.6 L1083.1 73.7 Z" fill="#5fc414"/><path d="M1095.9 74.6 L1094.57 75.85 L1094.15 77.63 L1092.4 77.1 L1090.65 77.63 L1090.23 75.85 L1088.9 74.6 L1090.23 73.35 L1090.65 71.57 L1092.4 72.1 L1094.15 71.57 L1094.57 73.35 Z" fill="#2738b8" stroke="#2738b8" stroke-width="0.9" stroke-linejoin="round"/><circle cx="1092.4" cy="74.6" r="1.35" fill="#c9f0b0"/>
<rect x="1104.8" y="68" width="2.9" height="1.9" fill="#a1a7b3"/><rect x="1108.7" y="68" width="2.9" height="1.9" fill="#a1a7b3"/><rect x="1112.6" y="68" width="2.9" height="1.9" fill="#a1a7b3"/><rect x="1104.8" y="70.8" width="2.9" height="1.9" fill="#a1a7b3"/><rect x="1108.7" y="70.8" width="2.9" height="1.9" fill="#a1a7b3"/><rect x="1112.6" y="70.8" width="2.9" height="1.9" fill="#a1a7b3"/><rect x="1104.8" y="73.6" width="2.9" height="1.9" fill="#a1a7b3"/><rect x="1108.7" y="73.6" width="2.9" height="1.9" fill="#a1a7b3"/><rect x="1112.6" y="73.6" width="2.9" height="1.9" fill="#a1a7b3"/><rect x="1112.6" y="73.6" width="2.9" height="1.9" fill="#c3c8d1"/><path d="M1111.4 77.6 h3.6 M1115 74.6 v3" stroke="#b3b8c2" stroke-width="0.9" fill="none"/>
<path d="M1122.9 66.7 H1132.3 L1134.9 69.3 V77.7 H1122.9 Z" fill="#37517e" stroke="#e4ebf5" stroke-opacity="0.6" stroke-width="0.8" paint-order="stroke"/><rect x="1125.5" y="66.7" width="6.2" height="4.6" fill="#c9d2e3"/><rect x="1128.5" y="67.3" width="1.6" height="3.2" fill="#37517e"/><rect x="1124.2" y="73.3" width="9.4" height="4.4" fill="#44608d"/>
<path d="M1142.3 66.7 H1151.7 L1154.3 69.3 V77.7 H1142.3 Z" fill="#37517e" stroke="#e4ebf5" stroke-opacity="0.6" stroke-width="0.8" paint-order="stroke"/><rect x="1144.9" y="66.7" width="6.2" height="4.6" fill="#c9d2e3"/><rect x="1147.9" y="67.3" width="1.6" height="3.2" fill="#37517e"/><rect x="1143.6" y="73.3" width="9.4" height="4.4" fill="#44608d"/><path d="M1147.1 74.4 H1153.7 M1150.4 71.1 V77.7" stroke="#7ed61f" stroke-width="2.3" fill="none"/>
<g transform="translate(1162 78.4) rotate(-43)"><path d="M0 0 L3.2 -2.05 H15.8 V2.05 H3.2 Z" fill="#465b7e"/><path d="M0 0 L3.2 -2.05 V2.05 Z" fill="#eef1f6"/><path d="M0 0 L1.3 -0.85 V0.85 Z" fill="#3a4a66"/><rect x="11.8" y="-2.05" width="0.9" height="4.1" fill="#cfd6e2"/></g>
<path d="M1184.57 71.1 H1181.97 V77.83 H1192.42 V71.1 H1189.83 M1187.2 67.1 V75.1" fill="none" stroke="#ffffff" stroke-opacity="0.55" stroke-width="3.35" stroke-linejoin="round"/><path d="M1184.57 71.1 H1181.97 V77.83 H1192.42 V71.1 H1189.83 M1187.2 67.1 V75.1" fill="none" stroke="#0b0b0b" stroke-width="1.75" stroke-linejoin="miter"/><path d="M1185.1 68.3 L1187.2 65.9 L1189.3 68.3 Z" fill="#0b0b0b"/>
<path d="M182.5 98.2 L185.9 98.2 L182.5 101.6 Z M193.3 98.2 L189.9 98.2 L193.3 101.6 Z M182.5 109 L185.9 109 L182.5 105.6 Z M193.3 109 L189.9 109 L193.3 105.6 Z" fill="#0b0b0b" stroke="#ffffff" stroke-opacity="0.5" stroke-width="0.8" paint-order="stroke"/><path d="M183.5 99.2 L186.1 101.8 M192.3 99.2 L189.7 101.8 M183.5 108 L186.1 105.4 M192.3 108 L189.7 105.4" stroke="#0b0b0b" stroke-width="1.5" fill="none"/>
<path d="M385.5 98.2 L388.9 98.2 L385.5 101.6 Z M396.3 98.2 L392.9 98.2 L396.3 101.6 Z M385.5 109 L388.9 109 L385.5 105.6 Z M396.3 109 L392.9 109 L396.3 105.6 Z" fill="#0b0b0b" stroke="#ffffff" stroke-opacity="0.5" stroke-width="0.8" paint-order="stroke"/><path d="M386.5 99.2 L389.1 101.8 M395.3 99.2 L392.7 101.8 M386.5 108 L389.1 105.4 M395.3 108 L392.7 105.4" stroke="#0b0b0b" stroke-width="1.5" fill="none"/>
<path d="M621.4 101.6 H618.8 V108.4 H629.2 V101.6 H626.6 M624 98.8 V105.6" fill="none" stroke="#ffffff" stroke-opacity="0.55" stroke-width="3.2" stroke-linejoin="round"/><path d="M621.4 101.6 H618.8 V108.4 H629.2 V101.6 H626.6 M624 98.8 V105.6" fill="none" stroke="#0b0b0b" stroke-width="1.6" stroke-linejoin="miter"/><path d="M621.9 100 L624 97.6 L626.1 100 Z" fill="#0b0b0b"/>
<path d="M636.4 98.2 L639.8 98.2 L636.4 101.6 Z M647.2 98.2 L643.8 98.2 L647.2 101.6 Z M636.4 109 L639.8 109 L636.4 105.6 Z M647.2 109 L643.8 109 L647.2 105.6 Z" fill="#0b0b0b" stroke="#ffffff" stroke-opacity="0.5" stroke-width="0.8" paint-order="stroke"/><path d="M637.4 99.2 L640 101.8 M646.2 99.2 L643.6 101.8 M637.4 108 L640 105.4 M646.2 108 L643.6 105.4" stroke="#0b0b0b" stroke-width="1.5" fill="none"/>
<path d="M1163.3 101.6 H1160.7 V108.4 H1171.1 V101.6 H1168.5 M1165.9 98.8 V105.6" fill="none" stroke="#ffffff" stroke-opacity="0.55" stroke-width="3.2" stroke-linejoin="round"/><path d="M1163.3 101.6 H1160.7 V108.4 H1171.1 V101.6 H1168.5 M1165.9 98.8 V105.6" fill="none" stroke="#0b0b0b" stroke-width="1.6" stroke-linejoin="miter"/><path d="M1163.8 100 L1165.9 97.6 L1168 100 Z" fill="#0b0b0b"/>
<path d="M1178.8 98.2 L1182.2 98.2 L1178.8 101.6 Z M1189.6 98.2 L1186.2 98.2 L1189.6 101.6 Z M1178.8 109 L1182.2 109 L1178.8 105.6 Z M1189.6 109 L1186.2 109 L1189.6 105.6 Z" fill="#0b0b0b" stroke="#ffffff" stroke-opacity="0.5" stroke-width="0.8" paint-order="stroke"/><path d="M1179.8 99.2 L1182.4 101.8 M1188.6 99.2 L1186 101.8 M1179.8 108 L1182.4 105.4 M1188.6 108 L1186 105.4" stroke="#0b0b0b" stroke-width="1.5" fill="none"/>
<path d="M604.8 350.2 H602.2 V357 H612.6 V350.2 H610 M607.4 347.4 V354.2" fill="none" stroke="#ffffff" stroke-opacity="0.55" stroke-width="3.2" stroke-linejoin="round"/><path d="M604.8 350.2 H602.2 V357 H612.6 V350.2 H610 M607.4 347.4 V354.2" fill="none" stroke="#0b0b0b" stroke-width="1.6" stroke-linejoin="miter"/><path d="M605.3 348.6 L607.4 346.2 L609.5 348.6 Z" fill="#0b0b0b"/>
<path d="M620.2 347 H631.2 L626.4 352.2 V357.8 H625 V352.2 Z" fill="#727272"/><path d="M628.8 354.6 l2.6 2.8 m0 -2.8 l-2.6 2.8" stroke="#a9adb5" stroke-width="0.8" fill="none"/>
<path d="M638 347 L641.4 347 L638 350.4 Z M648.8 347 L645.4 347 L648.8 350.4 Z M638 357.8 L641.4 357.8 L638 354.4 Z M648.8 357.8 L645.4 357.8 L648.8 354.4 Z" fill="#0b0b0b" stroke="#ffffff" stroke-opacity="0.5" stroke-width="0.8" paint-order="stroke"/><path d="M639 348 L641.6 350.6 M647.8 348 L645.2 350.6 M639 356.8 L641.6 354.2 M647.8 356.8 L645.2 354.2" stroke="#0b0b0b" stroke-width="1.5" fill="none"/>
<path d="M1163.3 350.2 H1160.7 V357 H1171.1 V350.2 H1168.5 M1165.9 347.4 V354.2" fill="none" stroke="#ffffff" stroke-opacity="0.55" stroke-width="3.2" stroke-linejoin="round"/><path d="M1163.3 350.2 H1160.7 V357 H1171.1 V350.2 H1168.5 M1165.9 347.4 V354.2" fill="none" stroke="#0b0b0b" stroke-width="1.6" stroke-linejoin="miter"/><path d="M1163.8 348.6 L1165.9 346.2 L1168 348.6 Z" fill="#0b0b0b"/>
<path d="M1178.8 347 L1182.2 347 L1178.8 350.4 Z M1189.6 347 L1186.2 347 L1189.6 350.4 Z M1178.8 357.8 L1182.2 357.8 L1178.8 354.4 Z M1189.6 357.8 L1186.2 357.8 L1189.6 354.4 Z" fill="#0b0b0b" stroke="#ffffff" stroke-opacity="0.5" stroke-width="0.8" paint-order="stroke"/><path d="M1179.8 348 L1182.4 350.6 M1188.6 348 L1186 350.6 M1179.8 356.8 L1182.4 354.2 M1188.6 356.8 L1186 354.2" stroke="#0b0b0b" stroke-width="1.5" fill="none"/>
<rect x="18.05" y="121.15" width="8.6" height="8.4" fill="#fcfdf6" stroke="#8fa132" stroke-width="1.3"/><path d="M19.9 125.4 L21.7 127.4 L24.9 123.6" stroke="#55661a" stroke-width="1.1" fill="none"/>
<rect x="18.05" y="136.2" width="8.6" height="8.4" fill="#fcfdf6" stroke="#8fa132" stroke-width="1.3"/><path d="M19.9 140.45 L21.7 142.45 L24.9 138.65" stroke="#55661a" stroke-width="1.1" fill="none"/>
<rect x="18.05" y="151.25" width="8.6" height="8.4" fill="#fcfdf6" stroke="#8fa132" stroke-width="1.3"/><path d="M19.9 155.5 L21.7 157.5 L24.9 153.7" stroke="#55661a" stroke-width="1.1" fill="none"/>
<rect x="18.05" y="166.3" width="8.6" height="8.4" fill="#fcfdf6" stroke="#8fa132" stroke-width="1.3"/><path d="M19.9 170.55 L21.7 172.55 L24.9 168.75" stroke="#55661a" stroke-width="1.1" fill="none"/>
<rect x="18.05" y="181.35" width="8.6" height="8.4" fill="#fcfdf6" stroke="#8fa132" stroke-width="1.3"/><path d="M19.9 185.6 L21.7 187.6 L24.9 183.8" stroke="#55661a" stroke-width="1.1" fill="none"/>
<rect x="18.05" y="196.4" width="8.6" height="8.4" fill="#fcfdf6" stroke="#8fa132" stroke-width="1.3"/><path d="M19.9 200.65 L21.7 202.65 L24.9 198.85" stroke="#55661a" stroke-width="1.1" fill="none"/>
<rect x="18.05" y="211.45" width="8.6" height="8.4" fill="#fcfdf6" stroke="#8fa132" stroke-width="1.3"/><path d="M19.9 215.7 L21.7 217.7 L24.9 213.9" stroke="#55661a" stroke-width="1.1" fill="none"/>
<rect x="221.05" y="121.15" width="8.6" height="8.4" fill="#fcfdf6" stroke="#8fa132" stroke-width="1.3"/><path d="M222.9 125.4 L224.7 127.4 L227.9 123.6" stroke="#55661a" stroke-width="1.1" fill="none"/>
<rect x="221.05" y="136.2" width="8.6" height="8.4" fill="#fcfdf6" stroke="#8fa132" stroke-width="1.3"/><path d="M222.9 140.45 L224.7 142.45 L227.9 138.65" stroke="#55661a" stroke-width="1.1" fill="none"/>
<rect x="221.05" y="151.25" width="8.6" height="8.4" fill="#fcfdf6" stroke="#8fa132" stroke-width="1.3"/><path d="M222.9 155.5 L224.7 157.5 L227.9 153.7" stroke="#55661a" stroke-width="1.1" fill="none"/>
<rect x="221.05" y="166.3" width="8.6" height="8.4" fill="#fcfdf6" stroke="#8fa132" stroke-width="1.3"/><path d="M222.9 170.55 L224.7 172.55 L227.9 168.75" stroke="#55661a" stroke-width="1.1" fill="none"/>
<path d="M211.7 138.55 L214.2 140.75 L211.7 142.95" stroke="#101c44" stroke-width="1.6" fill="none"/>
<path d="M211.7 153.6 L214.2 155.8 L211.7 158" stroke="#101c44" stroke-width="1.6" fill="none"/>
<path d="M211.7 168.65 L214.2 170.85 L211.7 173.05" stroke="#101c44" stroke-width="1.6" fill="none"/>
<circle cx="10.4" cy="642.8" r="5.1" fill="url(#globeg)"/>
<path d="M7.2 640 C8.6 638.6 10.4 639.4 10.2 641 C10 642.6 8 642.2 7.6 644 C6.6 643 6.4 641.2 7.2 640 Z M11.6 643.2 C13 642.6 14.4 643.4 13.8 645 C13.2 646.4 11.6 646.8 11 645.6 C10.6 644.8 10.8 643.6 11.6 643.2 Z M12.2 638.6 C13.2 638.8 14.2 639.8 14.4 640.8 C13.4 640.8 12.4 640 12.2 638.6 Z" fill="#4fc23a"/>
<rect x="90.6" y="636" width="1" height="12.5" fill="#dfe8f3"/><rect x="91.6" y="636" width="0.8" height="12.5" fill="#a9bbd3"/>
<circle cx="103.6" cy="639.7" r="2.9" fill="#86c463" stroke="#5e9a45" stroke-width="0.5"/>
<path d="M97.4 648 C97.4 644.4 100 642.8 103.6 642.8 C107.2 642.8 109.8 644.4 109.8 648 Z" fill="#7fbe5d" stroke="#5e9a45" stroke-width="0.5"/>
<rect x="1176.2" y="636" width="1" height="12.5" fill="#dfe8f3"/><rect x="1177.2" y="636" width="0.8" height="12.5" fill="#a9bbd3"/>
<rect x="1184" y="637.2" width="1.3" height="11.4" fill="#4a4f58"/>
<path d="M1185.3 638.2 L1192.2 641.2 L1185.3 644.8 Z" fill="#4dbb1c"/>
</svg>
</body></html>
